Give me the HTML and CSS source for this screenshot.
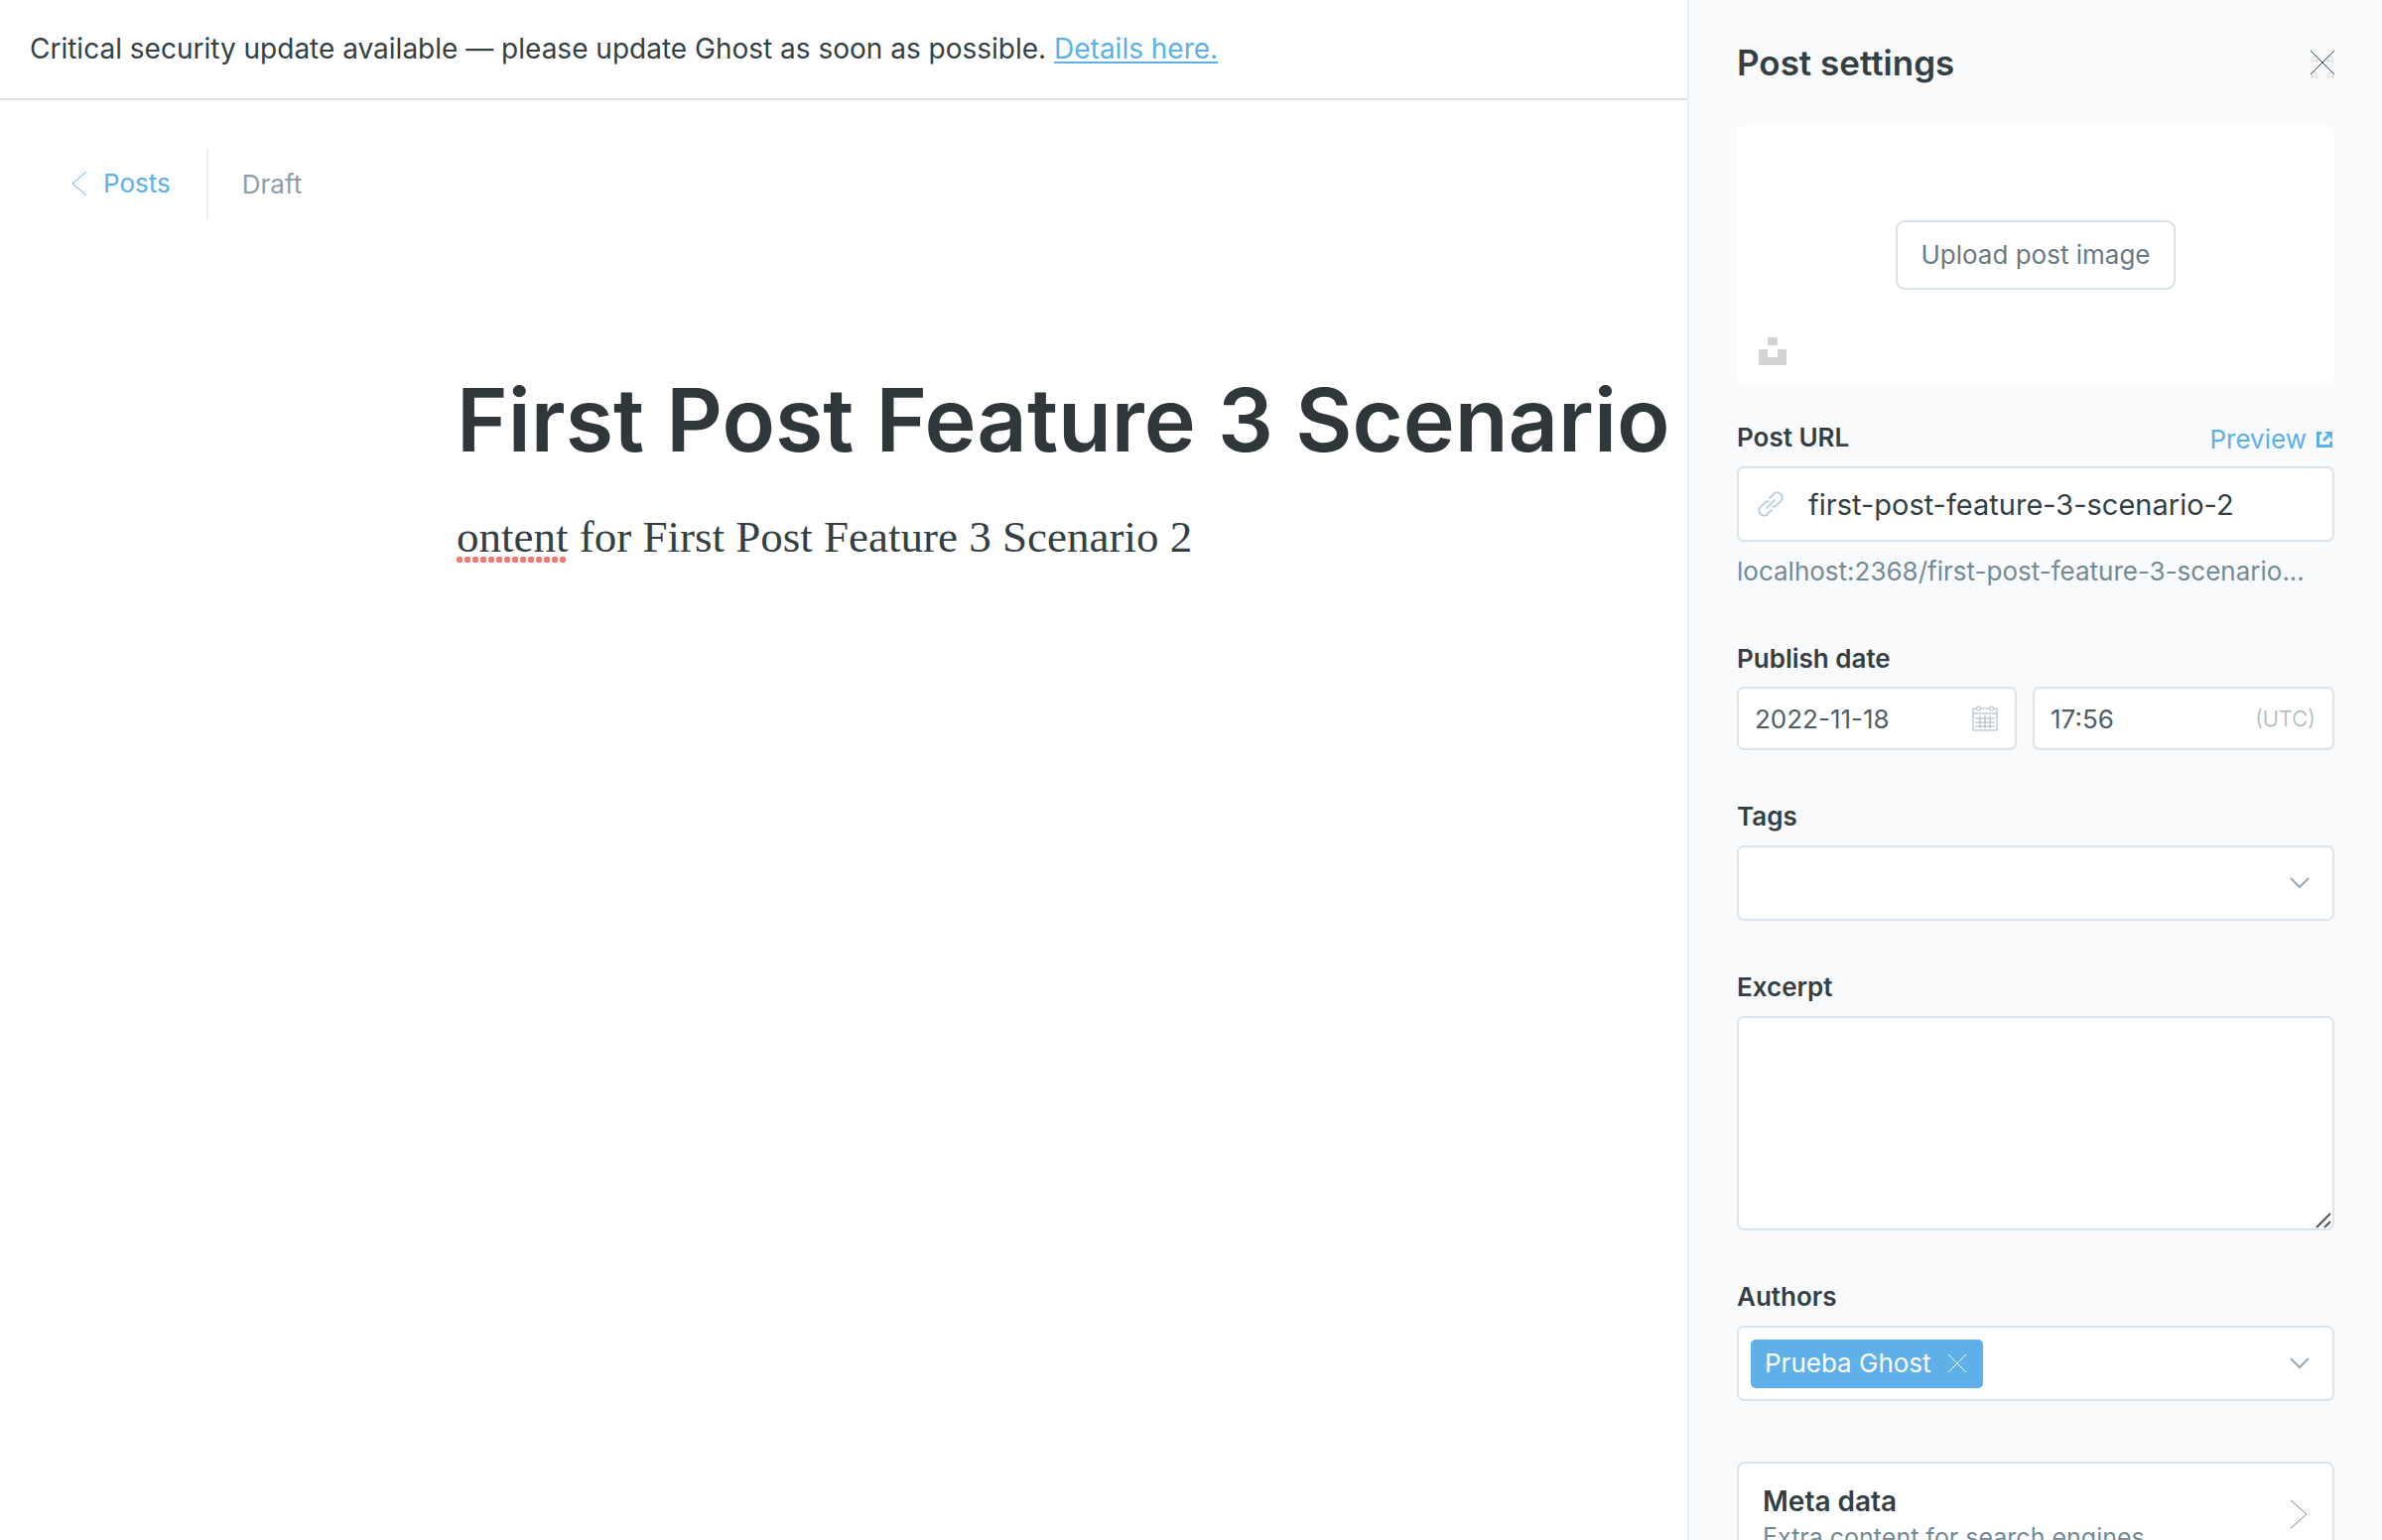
FILE: index.html
```html
<!DOCTYPE html>
<html lang="en">
<head>
<meta charset="utf-8">
<title>Ghost Admin - Editor</title>
<link rel="stylesheet" href="styles.css">
</head>
<body>
<div class="app">
  <main class="main">
    <aside class="alert">Critical security update available — please update Ghost as soon as possible. <a href="#details">Details here.</a></aside>
    <header class="editor-header">
      <a class="back" href="#posts">
        <svg class="back-icon" viewBox="0 0 16 26" aria-hidden="true"><path d="M15 1 1 13l14 12"/></svg>
        Posts
      </a>
      <span class="status">Draft</span>
    </header>
    <article class="editor">
      <h1 class="title">First Post Feature 3 Scenario</h1>
      <p class="content"><span class="misspelled">ontent</span> for First Post Feature 3 Scenario 2</p>
    </article>
  </main>

  <form class="settings">
    <header class="settings-header">
      <h2>Post settings</h2>
      <button class="close" type="button" aria-label="Close">
        <svg viewBox="0 0 24 24" aria-hidden="true"><path d="M0 0l24 24M24 0 0 24"/></svg>
      </button>
    </header>

    <div class="uploader">
      <button class="upload" type="button">Upload post image</button>
      <button class="unsplash" type="button" aria-label="Unsplash">
        <svg viewBox="0 0 28 28" aria-hidden="true"><path d="M9 0h10v8H9zM0 12h9v8h10v-8h9v16H0z"/></svg>
      </button>
    </div>

    <div class="field">
      <div class="label-row">
        <label for="url">Post URL</label>
        <a class="preview" href="#preview">Preview
          <svg viewBox="0 0 16 16" aria-hidden="true"><path d="M5 1.500H1.500v13h13V10M7 9l5-5"/><path class="solid" d="M8 0h8v8z"/></svg>
        </a>
      </div>
      <div class="control">
        <svg class="link-icon" viewBox="0 0 26 26" aria-hidden="true"><path d="M8.500 17.500l9-9M11.500 7.500l4.800-4.800a4.500 4.500 0 0 1 6.500 0l.6.6a4.500 4.500 0 0 1 0 6.500l-4.600 4.600a4.500 4.500 0 0 1-4.800 1M14.500 18.500l-4.800 4.800a4.500 4.500 0 0 1-6.500 0l-.6-.6a4.500 4.500 0 0 1 0-6.500l4.600-4.600a4.500 4.500 0 0 1 4.800-1"/></svg>
        <input id="url" class="url-input" type="text" value="first-post-feature-3-scenario-2">
      </div>
      <p class="help">localhost:2368/first-post-feature-3-scenario...</p>
    </div>

    <div class="field">
      <label for="date">Publish date</label>
      <div class="date-row">
        <div class="control small">
          <input id="date" type="text" value="2022-11-18">
          <svg class="calendar-icon" viewBox="0 0 26 26" aria-hidden="true"><path d="M4 3H1v22h24V3h-3M9 3h8M1 8h24M3 13h20M3 17h20M3 21h20M8 10v13M13 10v13M18 10v13"/><rect x="4.500" y="1" width="4" height="4" rx="2"/><rect x="17.500" y="1" width="4" height="4" rx="2"/></svg>
        </div>
        <div class="control small">
          <input id="time" type="text" value="17:56" aria-label="Publish time">
          <span class="zone">(UTC)</span>
        </div>
      </div>
    </div>

    <div class="field">
      <label for="tags">Tags</label>
      <div class="control token">
        <input id="tags" type="text">
        <svg class="chevron" viewBox="0 0 20 12" aria-hidden="true"><path d="M1 1l9 9 9-9"/></svg>
      </div>
    </div>

    <div class="field">
      <label for="excerpt">Excerpt</label>
      <div class="area">
        <textarea id="excerpt"></textarea>
        <svg class="grip" viewBox="0 0 16 16" aria-hidden="true"><path d="M1 15 15 1M9 15l6-6"/></svg>
      </div>
    </div>

    <div class="field">
      <label for="authors">Authors</label>
      <div class="control token">
        <button class="chip" type="button">Prueba Ghost
          <svg viewBox="0 0 20 20" aria-hidden="true"><path d="M1 1l18 18M19 1 1 19"/></svg>
        </button>
        <input id="authors" type="text">
        <svg class="chevron" viewBox="0 0 20 12" aria-hidden="true"><path d="M1 1l9 9 9-9"/></svg>
      </div>
    </div>

    <button class="nav-item" type="button">
      <span class="nav-text"><b>Meta data</b><span>Extra content for search engines</span></span>
      <svg viewBox="0 0 18 30" aria-hidden="true"><path d="M1 1l16 14L1 29"/></svg>
    </button>
  </form>
</div>
</body>
</html>
```
FILE: styles.css
```css
:root {
  --dark: #343f44;
  --blue: #5cb0e8;
  --grey: #738a94;
  --line: #dae4ea;
}

* {
  box-sizing: border-box;
}

body {
  margin: 0;
  background: #fff;
  color: var(--dark);
  font: 26px/32px Inter, "Liberation Sans", sans-serif;
}

h1,
h2,
p {
  margin: 0;
}

button,
input,
textarea {
  padding: 0;
  border: 0;
  background: none;
  color: inherit;
  font: inherit;
}

svg {
  flex: none;
  fill: none;
  stroke: currentColor;
}

.app {
  display: flex;
  height: 100vh;
  overflow: hidden;
}

.main {
  flex: 1;
  min-width: 0;
}

.alert {
  padding: 33px 30px;
  border-bottom: 2px solid #e1e1e1;
  font-size: 28px;
  line-height: 33px;
}

.alert a {
  color: var(--blue);
  text-underline-offset: 3px;
}

.editor-header {
  display: flex;
  align-items: center;
  height: 72px;
  margin: 48px 72px 0;
}

.back {
  display: flex;
  align-items: center;
  gap: 16px;
  height: 72px;
  padding-right: 36px;
  border-right: 2px solid #e5eff5;
  color: var(--blue);
  text-decoration: none;
}

.back-icon {
  width: 16px;
  height: 26px;
}

.status {
  padding: 2px 0 0 34px;
  color: #8d9ea7;
}

.editor {
  padding: 144px 0 0 460px;
}

.title {
  color: #2f373b;
  font-size: 88px;
  font-weight: 600;
  line-height: 116px;
  white-space: nowrap;
}

.content {
  margin-top: 32px;
  font: 45px/56px "Liberation Serif", serif;
}

.misspelled {
  padding-bottom: 1px;
  background: radial-gradient(circle at 3px 3px, #f37c70 3px, transparent 3px) left bottom / 8px 6px repeat-x;
}

.settings {
  display: flex;
  flex: none;
  flex-direction: column;
  width: 700px;
  height: 100%;
  padding: 0 48px;
  border-left: 2px solid #e5eff5;
  background: #f9fafc;
  overflow: hidden;
}

.settings > * {
  flex: none;
}

.settings-header {
  display: flex;
  align-items: center;
  justify-content: space-between;
  padding: 42px 0 43px;
}

.settings-header h2 {
  font-size: 35px;
  font-weight: 600;
  line-height: 42px;
}

.close svg {
  display: block;
  width: 24px;
  height: 24px;
  overflow: visible;
}

.uploader {
  position: relative;
  display: flex;
  align-items: center;
  justify-content: center;
  height: 260px;
  margin-bottom: 38px;
  border-radius: 8px;
  background: #fff;
}

.upload {
  height: 70px;
  padding: 0 23px;
  border: 2px solid #d5e1e6;
  border-radius: 9px;
  color: #667b85;
}

.unsplash {
  position: absolute;
  bottom: 19px;
  left: 22px;
}

.unsplash svg {
  display: block;
  width: 28px;
  height: 28px;
  fill: #d3d3d3;
  stroke: none;
}

.field {
  display: flex;
  flex-direction: column;
  margin-bottom: 51px;
}

.field label {
  font-weight: 600;
}

.label-row {
  display: flex;
  align-items: flex-start;
  justify-content: space-between;
  height: 32px;
}

.preview {
  display: flex;
  align-items: center;
  gap: 10px;
  padding: 2px 2px 0 0;
  color: var(--blue);
  text-decoration: none;
}

.preview svg {
  width: 16px;
  height: 16px;
  stroke-width: 3;
}

.preview .solid {
  fill: currentColor;
  stroke: none;
}

.control {
  display: flex;
  align-items: center;
  height: 76px;
  margin-top: 13px;
  border: 2px solid var(--line);
  border-radius: 7px;
  background: #fff;
}

.control input {
  flex: 1;
  min-width: 0;
  height: 100%;
}

.link-icon {
  width: 26px;
  height: 26px;
  margin: 0 25px 0 19px;
  color: #bdd0dc;
  stroke-width: 2;
}

.control .url-input {
  font-size: 29px;
}

.help {
  margin-top: 9px;
  color: var(--grey);
  line-height: 42px;
  white-space: nowrap;
}

.date-row {
  display: grid;
  grid-template-columns: minmax(0, 282fr) minmax(0, 304fr);
  gap: 16px;
  margin-top: 12px;
}

.small {
  height: 64px;
  margin-top: 0;
  padding: 0 17px 0 16px;
  color: #505d63;
}

.calendar-icon {
  width: 26px;
  height: 26px;
  color: #a8b5bb;
}

.zone {
  color: #a9b6bc;
  font-size: 22px;
  font-weight: 300;
}

.token {
  padding: 0 23px 0 12px;
}

.chevron {
  width: 20px;
  height: 12px;
  color: #99abb6;
  stroke-width: 2;
}

.area {
  position: relative;
  margin-top: 13px;
}

.area textarea {
  display: block;
  width: 100%;
  height: 216px;
  border: 2px solid var(--line);
  border-radius: 7px;
  background: #fff;
  resize: none;
}

.grip {
  position: absolute;
  right: 3px;
  bottom: 2px;
  width: 16px;
  height: 16px;
  color: #555;
  stroke-width: 2;
}

.chip {
  display: flex;
  align-items: center;
  gap: 16px;
  height: 49px;
  padding: 0 16px 0 14px;
  border-radius: 5px;
  background: #5fafe8;
  color: #fff;
}

.chip svg {
  width: 20px;
  height: 20px;
}

.nav-item {
  display: flex;
  align-items: flex-start;
  justify-content: space-between;
  margin-top: 10px;
  padding: 20px 25px 24px 24px;
  border: 2px solid var(--line);
  border-radius: 8px;
  background: #fff;
  text-align: left;
}

.nav-text {
  display: flex;
  flex-direction: column;
}

.nav-text b {
  font-size: 28px;
  font-weight: 600;
  line-height: 36px;
}

.nav-text span {
  color: var(--grey);
  font-size: 25px;
  line-height: 36px;
}

.nav-item svg {
  width: 18px;
  height: 30px;
  margin-top: 16px;
  color: var(--grey);
}
```
